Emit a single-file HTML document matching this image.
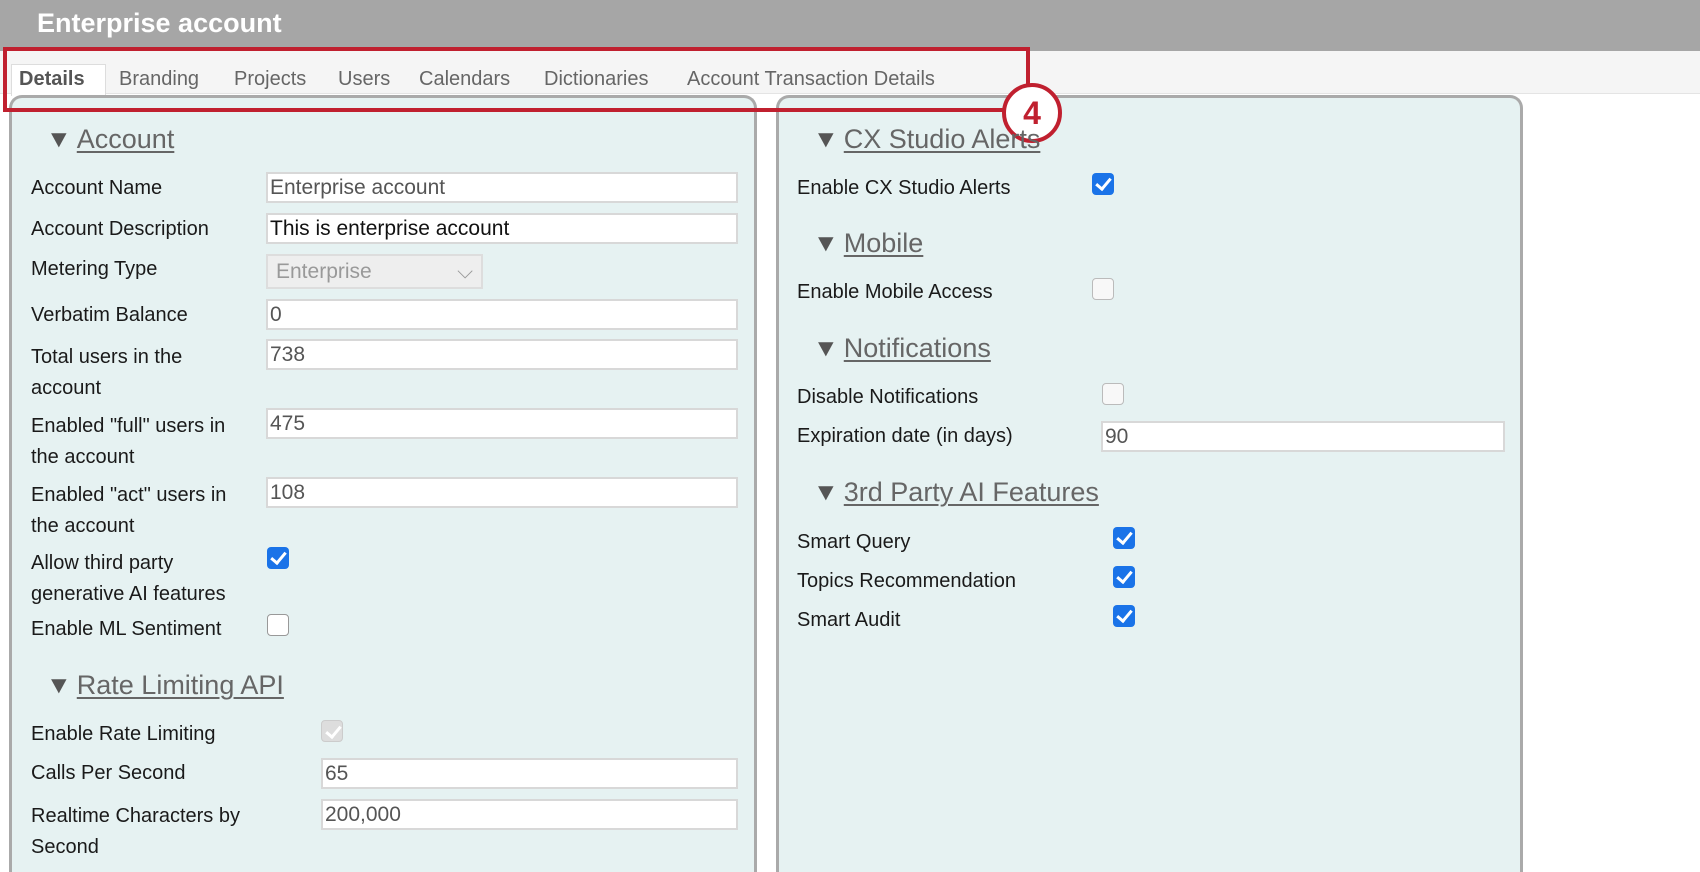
<!DOCTYPE html>
<html><head><meta charset="utf-8"><style>
*{margin:0;padding:0;box-sizing:border-box}
html,body{width:1700px;height:872px;overflow:hidden}
body{background:#fff;font-family:"Liberation Sans",sans-serif;color:#222;position:relative}
.a{position:absolute;white-space:nowrap}
.l{position:absolute;font-size:20px;line-height:24px;color:#1a1a1a;white-space:nowrap}
.h{position:absolute;font-size:27px;line-height:30px;color:#666;white-space:nowrap}
.h u{text-decoration:underline;text-decoration-thickness:2px;text-underline-offset:3px}
.h i{font-style:normal;display:inline-block;font-size:24px;color:#555;margin-right:6px;vertical-align:1px;transform:scaleX(1.1)}
.t{position:absolute;font-size:20px;color:#666}
.in{position:absolute;height:31px;background:#fff;border:2px solid #d8d8d8;font-size:21px;line-height:27px;padding-left:2px;color:#555}
.cb{position:absolute;width:22px;height:22px;border-radius:4px;border:1.5px solid #999;background:#fff}
.ck{position:absolute;width:22px;height:22px;border-radius:4px;background:#1a73e8}
.ck:after{content:"";position:absolute;left:7px;top:2px;width:6px;height:12px;border:solid #fff;border-width:0 3px 3px 0;transform:rotate(40deg)}
.dis{background:#ddd;border:1px solid #ccc}
.dis:after{border-color:#fff}
.dc{border-color:#bbb;background:#f8f8f8}
.p{position:absolute;top:95px;height:777px;background:#e6f2f2;border:3px solid #aaa;border-bottom:none;border-radius:13px 13px 0 0}
</style></head><body>
<div class="a" style="left:0;top:0;width:1700px;height:51px;background:#a6a6a6"></div>
<div class="a" style="left:37px;top:8px;font-size:27px;font-weight:bold;color:#fff">Enterprise account</div>
<div class="a" style="left:0;top:51px;width:1700px;height:43px;background:#f5f5f5;border-bottom:1px solid #e4e4e4"></div>
<div class="a" style="left:11px;top:64px;width:95px;height:32px;background:#fff;border:1px solid #ddd;border-bottom:none"></div>
<div class="a" style="left:19px;top:68px;font-size:20px;font-weight:bold;color:#555">Details</div>
<div class="t" style="left:119px;top:68px">Branding</div>
<div class="t" style="left:234px;top:68px">Projects</div>
<div class="t" style="left:338px;top:68px">Users</div>
<div class="t" style="left:419px;top:68px">Calendars</div>
<div class="t" style="left:544px;top:68px">Dictionaries</div>
<div class="t" style="left:687px;top:68px">Account Transaction Details</div>

<div class="p" style="left:9px;width:748px"></div>
<div class="p" style="left:776px;width:747px"></div>

<div class="a" style="left:3px;top:47px;width:1027px;height:65px;border:4px solid #c0202f"></div>
<div class="a" style="left:1002px;top:83px;width:60px;height:60px;border-radius:50%;background:#fff;border:4px solid #c0202f;font-size:32px;line-height:52px;text-align:center;color:#c0202f;font-weight:bold">4</div>

<!-- left -->
<div class="h" style="left:47px;top:124px"><i>▼</i><u>Account</u></div>
<div class="l" style="left:31px;top:176px">Account Name</div>
<div class="in" style="left:266px;top:172px;width:472px">Enterprise account</div>
<div class="l" style="left:31px;top:217px">Account Description</div>
<div class="in" style="left:266px;top:213px;width:472px;color:#111">This is enterprise account</div>
<div class="l" style="left:31px;top:257px">Metering Type</div>
<div class="in" style="left:266px;top:254px;width:217px;height:35px;background:#eee;border-color:#ddd;color:#999;line-height:31px;padding-left:8px">Enterprise<span style="position:absolute;right:8px;top:0;color:#999">⌵</span></div>
<div class="l" style="left:31px;top:303px">Verbatim Balance</div>
<div class="in" style="left:266px;top:299px;width:472px">0</div>
<div class="l" style="left:31px;top:342px;line-height:31px">Total users in the<br>account</div>
<div class="in" style="left:266px;top:339px;width:472px">738</div>
<div class="l" style="left:31px;top:411px;line-height:31px">Enabled "full" users in<br>the account</div>
<div class="in" style="left:266px;top:408px;width:472px">475</div>
<div class="l" style="left:31px;top:480px;line-height:31px">Enabled "act" users in<br>the account</div>
<div class="in" style="left:266px;top:477px;width:472px">108</div>
<div class="l" style="left:31px;top:548px;line-height:31px">Allow third party<br>generative AI features</div>
<div class="ck" style="left:267px;top:547px"></div>
<div class="l" style="left:31px;top:617px">Enable ML Sentiment</div>
<div class="cb" style="left:267px;top:614px"></div>
<div class="h" style="left:47px;top:670px"><i>▼</i><u>Rate Limiting API</u></div>
<div class="l" style="left:31px;top:722px">Enable Rate Limiting</div>
<div class="ck dis" style="left:321px;top:720px"></div>
<div class="l" style="left:31px;top:761px">Calls Per Second</div>
<div class="in" style="left:321px;top:758px;width:417px">65</div>
<div class="l" style="left:31px;top:801px;line-height:31px">Realtime Characters by<br>Second</div>
<div class="in" style="left:321px;top:799px;width:417px">200,000</div>

<!-- right -->
<div class="h" style="left:814px;top:124px"><i>▼</i><u>CX Studio Alerts</u></div>
<div class="l" style="left:797px;top:176px">Enable CX Studio Alerts</div>
<div class="ck" style="left:1092px;top:173px"></div>
<div class="h" style="left:814px;top:228px"><i>▼</i><u>Mobile</u></div>
<div class="l" style="left:797px;top:280px">Enable Mobile Access</div>
<div class="cb dc" style="left:1092px;top:278px"></div>
<div class="h" style="left:814px;top:333px"><i>▼</i><u>Notifications</u></div>
<div class="l" style="left:797px;top:385px">Disable Notifications</div>
<div class="cb dc" style="left:1102px;top:383px"></div>
<div class="l" style="left:797px;top:424px">Expiration date (in days)</div>
<div class="in" style="left:1101px;top:421px;width:404px">90</div>
<div class="h" style="left:814px;top:477px"><i>▼</i><u>3rd Party AI Features</u></div>
<div class="l" style="left:797px;top:530px">Smart Query</div>
<div class="ck" style="left:1113px;top:527px"></div>
<div class="l" style="left:797px;top:569px">Topics Recommendation</div>
<div class="ck" style="left:1113px;top:566px"></div>
<div class="l" style="left:797px;top:608px">Smart Audit</div>
<div class="ck" style="left:1113px;top:605px"></div>
</body></html>
